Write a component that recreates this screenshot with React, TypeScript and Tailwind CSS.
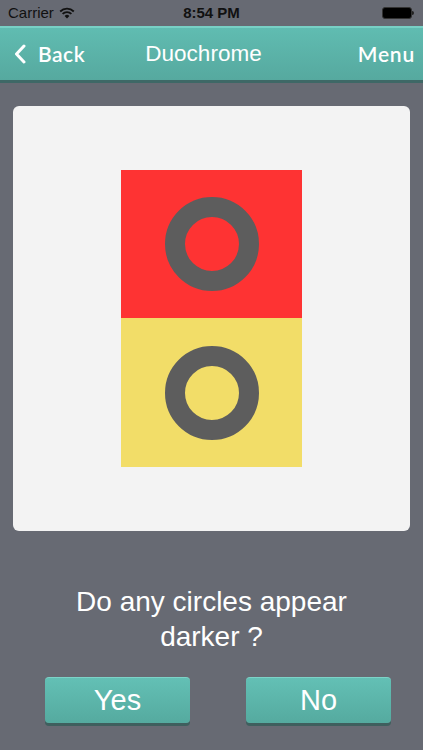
import React from 'react';

function Wifi() {
  return (
    <svg width="16" height="12" viewBox="0 0 16 12" className="ml-[5px]">
      <path d="M8 11.5 L5.6 8.9 A3.4 3.4 0 0 1 10.4 8.9 Z" fill="#111" />
      <path d="M3.6 6.9 A6.2 6.2 0 0 1 12.4 6.9" stroke="#111" strokeWidth="1.8" fill="none" />
      <path d="M1.2 4.5 A9.6 9.6 0 0 1 14.8 4.5" stroke="#111" strokeWidth="1.8" fill="none" />
    </svg>
  );
}

function Ring() {
  return <div className="w-[94px] h-[94px] rounded-full border-[20px] border-[#5d5d5d]" />;
}

function ActionButton({ label }: { label: string }) {
  return (
    <button className="w-[145px] h-[46px] rounded-[4px] bg-gradient-to-b from-[#63c0b5] to-[#55aa9f] border-t border-[#7dd3c8] shadow-[0_3px_0_#3f5f5e] text-white text-[29px] leading-none font-['Liberation_Sans',sans-serif]">
      {label}
    </button>
  );
}

export default function App() {
  return (
    <div className="w-[423px] h-[750px] bg-[#676a73] flex flex-col overflow-hidden font-['Liberation_Sans',sans-serif]">
      {/* status bar */}
      <div className="h-[26px] flex items-center justify-between px-[8px] text-[15px] text-[#111] relative">
        <div className="flex items-center">
          <span>Carrier</span>
          <Wifi />
        </div>
        <span className="absolute left-1/2 -translate-x-1/2 font-bold">8:54 PM</span>
        <div className="flex items-center mr-[1px]">
          <div className="w-[30px] h-[12px] rounded-[3px] border border-[#333] bg-black" />
          <div className="w-[2px] h-[4px] bg-[#222] rounded-r-sm" />
        </div>
      </div>

      {/* nav bar */}
      <div className="h-[57px] bg-gradient-to-b from-[#60bcb1] to-[#56a99f] border-t-[2px] border-[#78d0c5] border-b-[3px] border-b-[#3e6866] flex items-center justify-between px-[14px] text-white">
        <div className="flex items-center gap-[12px] w-[90px]">
          <svg width="12" height="20" viewBox="0 0 12 20">
            <path d="M10 2 L2.5 10 L10 18" stroke="white" strokeWidth="3" fill="none" strokeLinecap="round" strokeLinejoin="round" />
          </svg>
          <span className="text-[21px] tracking-[0.5px] font-['Lato',sans-serif] font-semibold">Back</span>
        </div>
        <span className="text-[22.5px] -ml-[22px]">Duochrome</span>
        <span className="w-[90px] text-right text-[21px] tracking-[0.8px] font-['Lato',sans-serif] font-semibold -mr-[6px]">Menu</span>
      </div>

      {/* test card */}
      <div className="mt-[23px] mx-[13px] h-[425px] bg-[#f3f3f3] rounded-[6px] flex items-center justify-center">
        <div className="w-[181px] flex flex-col">
          <div className="h-[148px] bg-[#fe3333] flex items-center justify-center">
            <Ring />
          </div>
          <div className="h-[149px] bg-[#f2dd68] flex items-center justify-center">
            <Ring />
          </div>
        </div>
      </div>

      <p className="mt-[53px] text-center text-white text-[28px] leading-[35px] px-[40px]">
        Do any circles appear darker ?
      </p>

      <div className="mt-[23px] flex justify-between pl-[45px] pr-[32px]">
        <ActionButton label="Yes" />
        <ActionButton label="No" />
      </div>
    </div>
  );
}
